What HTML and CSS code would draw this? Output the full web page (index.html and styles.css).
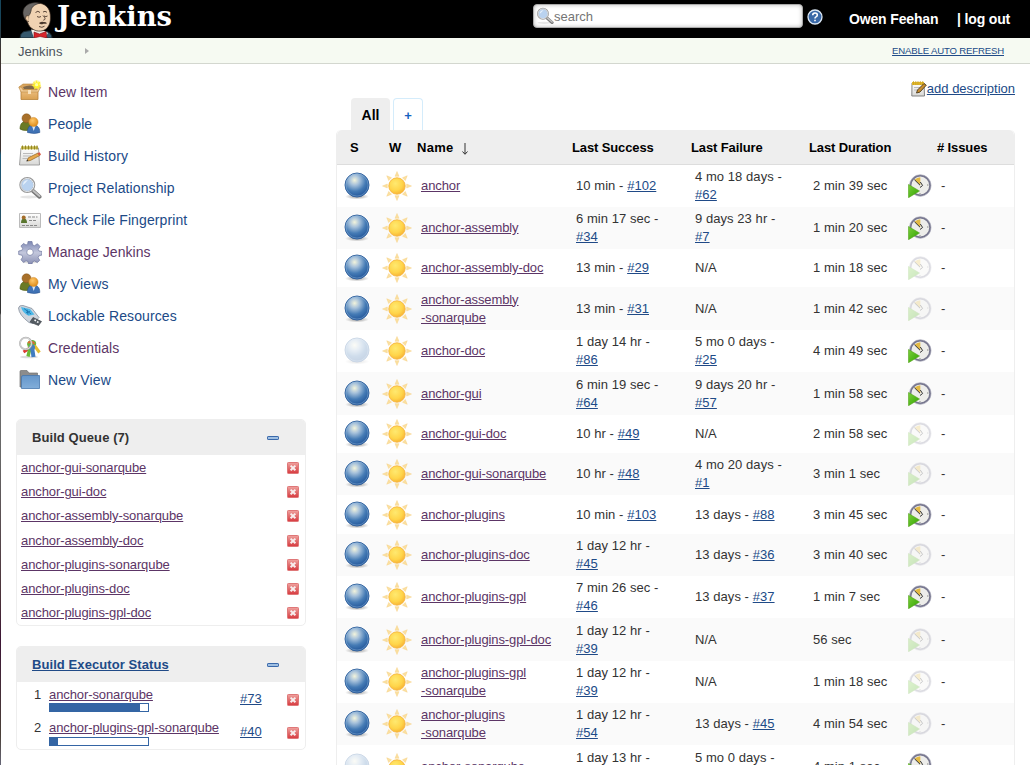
FILE: index.html
```html
<!DOCTYPE html>
<html lang="en">
<head>
<meta charset="utf-8">
<title>Dashboard [Jenkins]</title>
<link rel="stylesheet" href="styles.css">
</head>
<body>
<svg width="0" height="0" class="defs">
  <defs>
    <radialGradient id="gBall" cx=".4" cy=".3" r=".68"><stop offset="0" stop-color="#f3f4dc"/><stop offset=".3" stop-color="#a8c2db"/><stop offset=".68" stop-color="#457bb5"/><stop offset="1" stop-color="#265a9d"/></radialGradient>
    <radialGradient id="gSun" cx=".4" cy=".35" r=".65"><stop offset="0" stop-color="#ffe970"/><stop offset=".65" stop-color="#ffd54a"/><stop offset="1" stop-color="#f8b637"/></radialGradient>
    <radialGradient id="gShade"><stop offset="0" stop-color="#555" stop-opacity=".7"/><stop offset="1" stop-color="#777" stop-opacity="0"/></radialGradient>
    <linearGradient id="gRed" x2="0" y2="1"><stop offset="0" stop-color="#f0a3a0"/><stop offset=".5" stop-color="#e06d6d"/><stop offset="1" stop-color="#d8393f"/></linearGradient>
    <linearGradient id="gBox" x2="0" y2="1"><stop offset="0" stop-color="#edc082"/><stop offset="1" stop-color="#d9a052"/></linearGradient>
    <linearGradient id="gPad" x2="0" y2="1"><stop offset="0" stop-color="#fff"/><stop offset="1" stop-color="#d8d8d6"/></linearGradient>
    <linearGradient id="gFolder" x2="0" y2="1"><stop offset="0" stop-color="#6596ca"/><stop offset="1" stop-color="#82aeda"/></linearGradient>
    <linearGradient id="gGear" x2="0" y2="1"><stop offset="0" stop-color="#7d88b4"/><stop offset=".5" stop-color="#c3c7dc"/><stop offset="1" stop-color="#8a90b4"/></linearGradient>
    <linearGradient id="gGreen" x2="1" y2="1"><stop offset="0" stop-color="#7bcf3a"/><stop offset="1" stop-color="#2fa300"/></linearGradient>
    <radialGradient id="gPerson" cx=".4" cy=".35" r=".65"><stop offset="0" stop-color="#ffc86a"/><stop offset="1" stop-color="#e08d1b"/></radialGradient>
    <symbol id="ball" viewBox="0 0 26 28">
      <ellipse cx="13" cy="24.500" rx="12" ry="3" fill="url(#gShade)"/>
      <circle cx="13" cy="13" r="12" fill="url(#gBall)" stroke="#2b5c9b" stroke-width=".9"/>
      <circle cx="13" cy="13" r="11.100" fill="none" stroke="#9cc0df" stroke-opacity=".6" stroke-width=".7"/>
    </symbol>
    <symbol id="sun" viewBox="0 0 30 30">
      <g fill="#fbe0a0" stroke="#f5cd7c" stroke-width=".4">
        <path id="ray" d="M13 5.300 15 .5l2 4.800z"/>
        <use href="#ray" transform="rotate(45 15 15)"/><use href="#ray" transform="rotate(90 15 15)"/><use href="#ray" transform="rotate(135 15 15)"/><use href="#ray" transform="rotate(180 15 15)"/><use href="#ray" transform="rotate(225 15 15)"/><use href="#ray" transform="rotate(270 15 15)"/><use href="#ray" transform="rotate(315 15 15)"/>
      </g>
      <circle cx="15" cy="15" r="8.200" fill="url(#gSun)" stroke="#f6b53f" stroke-width=".9"/>
    </symbol>
    <symbol id="clock" viewBox="0 0 24 24">
      <circle cx="12.300" cy="11.500" r="9.800" fill="#ededea" stroke="#77778f" stroke-width="1.800"/>
      <circle cx="12.300" cy="11.500" r="10.800" fill="none" stroke="#a5a5b5" stroke-width=".6"/>
      <path d="M12.300 11.200 6.500 5.700Q9 3.200 12.300 3.200z" fill="#e2b944"/>
      <path d="M6.400 5.700 12 11.200M12.300 8l2.300 3.500-2.600 2" fill="none" stroke="#333" stroke-width="1"/>
      <path d="M19 11h1.500M12 19v1" stroke="#888"/>
      <path d="M.5 10.500 11.500 17 .5 23.700z" fill="url(#gGreen)" stroke="#55a51d" stroke-width=".6"/>
    </symbol>
    <symbol id="stop" viewBox="0 0 12 12">
      <rect x=".5" y=".5" width="11" height="11" rx=".8" fill="url(#gRed)" stroke="#df7778"/>
      <path d="m3.600 3.600 4.800 4.600m0-4.600L3.600 8.200" stroke="#f8eeee" stroke-width="2"/>
    </symbol>
    <symbol id="minus" viewBox="0 0 12 4"><rect x=".5" y=".5" width="11" height="3" rx=".6" fill="#9fbfe2" stroke="#3968aa"/></symbol>
    <symbol id="people" viewBox="0 0 24 24">
      <path d="M2 17c0-6 3-7.600 6-7.600s6 2 6 7.600l-5 1.500q-5 0-7-1.500z" fill="#6a7a24" stroke="#4b5b12" stroke-width=".6"/>
      <circle cx="8.500" cy="6.300" r="4.500" fill="#a8702a" stroke="#85541a" stroke-width=".5"/>
      <path d="M9.500 20.500c0-6 2.500-7.500 6-7.500s6.300 2 6.300 7.500q-5 2-12.300 0z" fill="#3f72b5" stroke="#234f8d" stroke-width=".6"/>
      <path d="M14 14h3.500L15.700 19z" fill="#dce8f8"/>
      <circle cx="15.500" cy="10" r="4.600" fill="url(#gPerson)" stroke="#d18a2a" stroke-width=".5"/>
    </symbol>
    <symbol id="lens" viewBox="0 0 24 24">
      <ellipse cx="11" cy="21" rx="9" ry="1.500" fill="#ccc" opacity=".5"/>
      <path d="m14.500 14.500 7 6.200" stroke="#777" stroke-width="4" stroke-linecap="round"/>
      <path d="m15 14.500 6.500 5.500" stroke="#c1c1c1" stroke-width="2" stroke-linecap="round"/>
      <circle cx="9.300" cy="9" r="7" fill="#b9d2ef" stroke="#999" stroke-width="2"/>
      <circle cx="9.300" cy="9" r="6.500" fill="none" stroke="#e9eef3"/>
      <path d="M5 9q0-4.500 5-5-2 2.500-5 5z" fill="#e6f0fb"/>
    </symbol>
  </defs>
</svg>

<header class="top">
  <svg class="logo" width="172" height="38" viewBox="0 0 172 38">
    <path d="M20 38q0-5 4-6.500l7-1 7 4 9-3q5 2 5 6.500z" fill="#36596e" stroke="#16262f"/>
    <path d="M31 29.500 45 31l3 2-3 5H34z" fill="#f3f0eb"/>
    <path d="M26 19C24 9 29 3 37 3c8 0 13 5 13.300 12 .4 5 0 10-3.800 13.500-3 3-9 3.500-13 1-3-1.500-5-4-6-7.500z" fill="#f0d3b3" stroke="#3a2a20" stroke-width=".7"/>
    <path d="M25.500 20C22 15 22 9 26.500 5.500 30.500 2.500 36 2 40 3.200 34 4.500 31.500 7 31 11l-1 3q-2 1-1.500 6z" fill="#696664" stroke="#29231f" stroke-width=".6"/>
    <path d="M28.500 15.500q-3.500-.5-3 3 .5 3.500 3.500 3" fill="#eccaa5" stroke="#3a2a20" stroke-width=".7"/>
    <path d="M35.500 12.500q2.500-2.500 4.500 0M43 12q2-1.500 4 .3M37 16.500q2 1.500 4 0M44 16q2 1.200 3.500 0M43 15.500q4 4 .3 4.700M39 26.500q3 1.800 5.500-.3" fill="none" stroke="#4a372b" stroke-width=".9"/>
    <path d="M39 23q3-2 4.500-1 2-.5 3.500 1.200-1.500 1-3.500.5-3 1.300-4.500-.7z" fill="#4a382c"/>
    <path d="m34 32 5.500 2L46 31.500l1 6.500-7-1.500-6 1.500z" fill="#d8242b" stroke="#7b1115" stroke-width=".6"/>
    <text x="57" y="26" textLength="115" lengthAdjust="spacingAndGlyphs" class="wordmark">Jenkins</text>
  </svg>
  <div class="account">
    <div class="search"><svg width="18" height="18"><use href="#lens"/></svg><span>search</span></div>
    <svg class="help" width="16" height="16" viewBox="0 0 16 16"><circle cx="8" cy="8" r="7" fill="#3a69a8" stroke="#dce8f5" stroke-width="1.300"/><path d="M5.700 6.300q0-2.300 2.300-2.300t2.300 2q0 1.200-1.300 1.900-1 .5-1 1.500M8 10.700v1.600" fill="none" stroke="#fff" stroke-width="1.600"/></svg>
    <a class="user">Owen Feehan</a><a class="logout">| log out</a>
  </div>
</header>
<nav class="crumbs"><span class="home">Jenkins</span><i class="arrow"></i><a class="refresh">ENABLE AUTO REFRESH</a></nav>

<div class="page">
<aside class="side">
  <ul class="tasks">
    <li class="seen"><svg width="24" height="24" viewBox="0 0 24 24"><path d="m1 7 4-3h13l4 3-2 3H3z" fill="#d9a55f" stroke="#b9843b" stroke-width=".6"/><path d="M5 7q7-3 13 0l-1 2H6z" fill="#80694b"/><path d="M3 10h17v9.500H3z" fill="url(#gBox)" stroke="#b8813a" stroke-width=".8"/><path d="m.8 7.200 2.500-.2 1.700 2.800h14L20.500 7l2.300.3L20 12H3z" fill="#f0ca95" stroke="#bd8a45" stroke-width=".6"/><path d="M10 10h3v4h-3z" fill="#f9e2bd"/><circle cx="18.600" cy="4.500" r="4.300" fill="#fff04a" opacity=".55"/><path d="m18.500 0 1 2.800 3-1-1.300 2.800 2.300 1.600-3 .6.300 3-2.300-2-2.500 1.600.7-2.900-2.900-.8 2.700-1.400L15.200 2l2.600.9z" fill="#fff32e"/><circle cx="18.600" cy="4.700" r="1.600" fill="#ffffa8"/></svg>New Item</li>
    <li><svg width="24" height="24"><use href="#people"/></svg>People</li>
    <li><svg width="24" height="24" viewBox="0 0 24 24"><path d="M3 4h17.500l1 17H1.500z" fill="url(#gPad)" stroke="#999" stroke-width=".9"/><path d="M3 2.300h17v3H3z" fill="#c5b84c"/><path d="M4.500 1.500v4m3-4v4m3-4v4m3-4v4m3-4v4m2.500-4v4" stroke="#938625"/><path d="M5 9.500h10M5 12h8M4.500 14.500h5" stroke="#bbb"/><path d="m9 17 1.300-3.200L20 9l1.800 2.500-9.500 5z" fill="#e7a94b" stroke="#8d6427" stroke-width=".7"/><path d="m19.500 9.200 2-1 1.600 2.200-2 1.200z" fill="#d85742"/><path d="m8.300 17.500.9-2 1.200 1.300z" fill="#333"/></svg>Build History</li>
    <li><svg width="24" height="24"><use href="#lens"/></svg>Project Relationship</li>
    <li><svg width="24" height="24" viewBox="0 0 24 24"><path d="M1.500 5.500h21v14h-21z" fill="url(#gPad)" stroke="#bbb"/><path d="M3 15q0-4.500 3-4.500T9 15z" fill="#59762e"/><circle cx="5.700" cy="9.500" r="2" fill="#a56d2a"/><path d="M10 9h9.500M11 12.500h8M4 17.500h16" stroke="#888" stroke-dasharray="3 1"/></svg>Check File Fingerprint</li>
    <li class="seen"><svg width="24" height="24" viewBox="0 0 24 24"><ellipse cx="12" cy="22" rx="8" ry="1.500" fill="#ccc" opacity=".6"/><g fill="url(#gGear)" stroke="#6e779f" stroke-width=".7"><path fill-rule="evenodd" d="m10 1.500 4 0 .5 3.300 2 .9 2.900-2 2.700 2.800-1.900 2.800.8 1.700 3 .5v3.500l-3.100.8-.8 2 1.700 2.500-2.500 2.300-2.800-1.600-2 .8-.5 2.200h-3.300l-.7-2.500-2-.8-2.400 1.800L3 19.800 4.700 17l-.8-1.800-3.200-.7V11l3.100-.6.9-2L2.900 6l2.600-2.600L8 5l1.700-.8zM12 9a3.200 3.200 0 1 0 .01 0z"/></g></svg>Manage Jenkins</li>
    <li><svg width="24" height="24"><use href="#people"/></svg>My Views</li>
    <li><svg width="24" height="24" viewBox="0 0 24 24"><path d="M.5 4Q1 1 5 1.500l9 3 7 9-6 6-4-1Q1 11 .5 4z" fill="#cfd5dd" stroke="#858f9d" stroke-width=".8"/><path d="m3 3 9 2 4.500 5.500-6 1.300q-6-3-7.500-8.800z" fill="#4cb8e8"/><path d="m6 4.500 7 5.500m-4-4.500 1 5m-2-2 4-1" stroke="#176ca8" stroke-width=".8"/><path d="m15 13.500 8.500 4-3 4-8.500-3.500z" fill="#555c63" stroke="#34393f" stroke-width=".6"/><path d="m16.500 16 1.500.7m1 1 1.500.7" stroke="#fff" stroke-width="1.600"/></svg>Lockable Resources</li>
    <li class="seen"><svg width="24" height="24" viewBox="0 0 24 24"><ellipse cx="11" cy="21" rx="9" ry="1.300" fill="#ddd"/><path d="m16 9 5.500 7.500" stroke="#e3bd32" stroke-width="3"/><path d="M12 12 5.500 16" stroke="#dd3a34" stroke-width="3"/><path d="m12 12-2 8.500" stroke="#6ab936" stroke-width="3.400"/><path d="m14 11 1.500 10" stroke="#407cc0" stroke-width="4"/><path d="M9 8q1-4.500 6-4 4 1 3 5l-3 .5q-3-1-5 2z" fill="#69b53c"/><path d="M10 7q4-3 6.500 1" fill="none" stroke="#db6b33" stroke-width="2"/><circle cx="14" cy="11.500" r="3" fill="#477fba"/><circle cx="7.800" cy="7.500" r="5.800" fill="none" stroke="#aaa" stroke-width="1.800"/><circle cx="7.800" cy="7.500" r="5.700" fill="none" stroke="#eee" stroke-width=".7"/></svg>Credentials</li>
    <li><svg width="24" height="24" viewBox="0 0 24 24"><path d="M2 19V3.500q0-1 1-1h6l2 2.500h8.500v14z" fill="#8c8c8c" stroke="#717171" stroke-width=".7"/><path d="M3.500 9q0-1.500 1.500-1.500h16.500v13H3.500z" fill="url(#gFolder)" stroke="#4777ad" stroke-width=".8"/></svg>New View</li>
  </ul>

  <section class="pane queue">
    <h2>Build Queue (7)<svg width="12" height="4"><use href="#minus"/></svg></h2>
    <ul>
      <li><a>anchor-gui-sonarqube</a><svg width="12" height="12"><use href="#stop"/></svg></li>
      <li><a>anchor-gui-doc</a><svg width="12" height="12"><use href="#stop"/></svg></li>
      <li><a>anchor-assembly-sonarqube</a><svg width="12" height="12"><use href="#stop"/></svg></li>
      <li><a>anchor-assembly-doc</a><svg width="12" height="12"><use href="#stop"/></svg></li>
      <li><a>anchor-plugins-sonarqube</a><svg width="12" height="12"><use href="#stop"/></svg></li>
      <li><a>anchor-plugins-doc</a><svg width="12" height="12"><use href="#stop"/></svg></li>
      <li><a>anchor-plugins-gpl-doc</a><svg width="12" height="12"><use href="#stop"/></svg></li>
    </ul>
  </section>

  <section class="pane executors">
    <h2><a>Build Executor Status</a><svg width="12" height="4"><use href="#minus"/></svg></h2>
    <div class="exec"><span class="num">1</span><div class="job"><a class="seen">anchor-sonarqube</a><div class="bar"><i style="width:92%"></i></div></div><a class="build">#73</a><svg width="12" height="12"><use href="#stop"/></svg></div>
    <div class="exec"><span class="num">2</span><div class="job"><a class="seen">anchor-plugins-gpl-sonarqube</a><div class="bar"><i style="width:8%"></i></div></div><a class="build">#40</a><svg width="12" height="12"><use href="#stop"/></svg></div>
  </section>
</aside>

<main class="main">
  <div class="describe"><svg width="16" height="16" viewBox="0 0 16 16"><path d="M1 2h12l.5 13H.8z" fill="url(#gPad)" stroke="#777" stroke-width=".9"/><path d="M1 1h12v3H1z" fill="#e0b72d"/><path d="M2.500 0v4m2.300-4v4M7 0v4m2.300-4v4m2.400-4v4" stroke="#c79d1e" stroke-width=".7"/><path d="M3 6.500h6M3 9h4" stroke="#bbb"/><path d="m5.500 12 1-3L13 2.500l2.300 1.700-6.500 7z" fill="#c98e2f" stroke="#4b391b" stroke-width=".9"/></svg><a>add description</a></div>
  <div class="tabs"><span class="tab active">All</span><span class="tab add">+</span></div>
  <div class="table">
    <div class="row head"><span class="s">S</span><span class="w">W</span><span class="name">Name<svg class="sort" width="8" height="12" viewBox="0 0 8 12"><path d="M4 0v11M1.500 8.500 4 11.300 6.500 8.500" fill="none" stroke="#333" stroke-width="1"/></svg></span><span>Last Success</span><span>Last Failure</span><span>Last Duration</span><span class="issues"># Issues</span></div>
    <div class="row"><svg class="ball"><use href="#ball"/></svg><svg class="sun"><use href="#sun"/></svg><a class="seen">anchor</a><span>10 min - <a>#102</a></span><span>4 mo 18 days -<br><a>#62</a></span><span>2 min 39 sec</span><svg class="clock"><use href="#clock"/></svg><span>-</span></div>
    <div class="row"><svg class="ball"><use href="#ball"/></svg><svg class="sun"><use href="#sun"/></svg><a class="seen">anchor-assembly</a><span>6 min 17 sec -<br><a>#34</a></span><span>9 days 23 hr -<br><a>#7</a></span><span>1 min 20 sec</span><svg class="clock"><use href="#clock"/></svg><span>-</span></div>
    <div class="row h38"><svg class="ball"><use href="#ball"/></svg><svg class="sun"><use href="#sun"/></svg><a class="seen">anchor-assembly-doc</a><span>13 min - <a>#29</a></span><span>N/A</span><span>1 min 18 sec</span><svg class="clock off"><use href="#clock"/></svg><span>-</span></div>
    <div class="row h43"><svg class="ball"><use href="#ball"/></svg><svg class="sun"><use href="#sun"/></svg><a class="seen">anchor-assembly<br>-sonarqube</a><span>13 min - <a>#31</a></span><span>N/A</span><span>1 min 42 sec</span><svg class="clock off"><use href="#clock"/></svg><span>-</span></div>
    <div class="row"><svg class="ball off"><use href="#ball"/></svg><svg class="sun"><use href="#sun"/></svg><a class="seen">anchor-doc</a><span>1 day 14 hr -<br><a>#86</a></span><span>5 mo 0 days -<br><a>#25</a></span><span>4 min 49 sec</span><svg class="clock"><use href="#clock"/></svg><span>-</span></div>
    <div class="row h43"><svg class="ball"><use href="#ball"/></svg><svg class="sun"><use href="#sun"/></svg><a class="seen">anchor-gui</a><span>6 min 19 sec -<br><a>#64</a></span><span>9 days 20 hr -<br><a>#57</a></span><span>1 min 58 sec</span><svg class="clock"><use href="#clock"/></svg><span>-</span></div>
    <div class="row h38"><svg class="ball"><use href="#ball"/></svg><svg class="sun"><use href="#sun"/></svg><a class="seen">anchor-gui-doc</a><span>10 hr - <a>#49</a></span><span>N/A</span><span>2 min 58 sec</span><svg class="clock off"><use href="#clock"/></svg><span>-</span></div>
    <div class="row"><svg class="ball"><use href="#ball"/></svg><svg class="sun"><use href="#sun"/></svg><a class="seen">anchor-gui-sonarqube</a><span>10 hr - <a>#48</a></span><span>4 mo 20 days -<br><a>#1</a></span><span>3 min 1 sec</span><svg class="clock off"><use href="#clock"/></svg><span>-</span></div>
    <div class="row h39"><svg class="ball"><use href="#ball"/></svg><svg class="sun"><use href="#sun"/></svg><a class="seen">anchor-plugins</a><span>10 min - <a>#103</a></span><span>13 days - <a>#88</a></span><span>3 min 45 sec</span><svg class="clock"><use href="#clock"/></svg><span>-</span></div>
    <div class="row"><svg class="ball"><use href="#ball"/></svg><svg class="sun"><use href="#sun"/></svg><a class="seen">anchor-plugins-doc</a><span>1 day 12 hr -<br><a>#45</a></span><span>13 days - <a>#36</a></span><span>3 min 40 sec</span><svg class="clock off"><use href="#clock"/></svg><span>-</span></div>
    <div class="row"><svg class="ball"><use href="#ball"/></svg><svg class="sun"><use href="#sun"/></svg><a class="seen">anchor-plugins-gpl</a><span>7 min 26 sec -<br><a>#46</a></span><span>13 days - <a>#37</a></span><span>1 min 7 sec</span><svg class="clock"><use href="#clock"/></svg><span>-</span></div>
    <div class="row h43"><svg class="ball"><use href="#ball"/></svg><svg class="sun"><use href="#sun"/></svg><a class="seen">anchor-plugins-gpl-doc</a><span>1 day 12 hr -<br><a>#39</a></span><span>N/A</span><span>56 sec</span><svg class="clock off"><use href="#clock"/></svg><span>-</span></div>
    <div class="row"><svg class="ball"><use href="#ball"/></svg><svg class="sun"><use href="#sun"/></svg><a class="seen">anchor-plugins-gpl<br>-sonarqube</a><span>1 day 12 hr -<br><a>#39</a></span><span>N/A</span><span>1 min 18 sec</span><svg class="clock off"><use href="#clock"/></svg><span>-</span></div>
    <div class="row"><svg class="ball"><use href="#ball"/></svg><svg class="sun"><use href="#sun"/></svg><a class="seen">anchor-plugins<br>-sonarqube</a><span>1 day 12 hr -<br><a>#54</a></span><span>13 days - <a>#45</a></span><span>4 min 54 sec</span><svg class="clock off"><use href="#clock"/></svg><span>-</span></div>
    <div class="row h43"><svg class="ball off"><use href="#ball"/></svg><svg class="sun"><use href="#sun"/></svg><a class="seen">anchor-sonarqube</a><span>1 day 13 hr -</span><span>5 mo 0 days -</span><span>4 min 1 sec</span><svg class="clock"><use href="#clock"/></svg></div>
  </div>
</main>
</div>
</body>
</html>
```
FILE: styles.css
```css
* { box-sizing: border-box; }
html { overflow: hidden; }
body {
  margin: 0;
  height: 765px;
  overflow: hidden;
  padding-left: 1px;
  background: linear-gradient(#17455a 0, #17455a 18px, #3d332f 50px, #3a302e 150px, #1c5876 155px, #2a4c5c 255px, #333 258px, #333 313px, #777 315px, #666 460px, #4a3038 600px, #3c1535 640px, #4a4038 735px, #667 765px);
  font: 13px/18px "Liberation Sans", Arial, sans-serif;
  color: #333;
}
.defs { position: absolute; }
ul { list-style: none; margin: 0; padding: 0; }
svg { display: block; flex: none; }
a { color: #204a87; text-decoration: underline; text-underline-offset: 1px; }
a.seen, .queue li a { color: #5c3566; letter-spacing: -.1px; }

.top { display: flex; justify-content: space-between; height: 38px; background: #000; }
.wordmark { font: bold 27px "DejaVu Serif", serif; fill: #fff; }
.logo { margin-left: -1px; }
.account { display: flex; align-items: flex-start; }
.search {
  display: flex;
  align-items: center;
  width: 270px;
  height: 24px;
  margin-top: 4px;
  padding-left: 2px;
  border: 1px solid #aaa;
  border-radius: 4px;
  background: #fff;
  box-shadow: inset 0 0 4px #bbb;
  color: #757575;
}
.search span { padding-top: 1px; }
.help { margin: 9px 0 0 4px; }
.account a { margin-top: 10px; color: #fff; font-weight: bold; font-size: 14px; letter-spacing: -.15px; text-decoration: none; white-space: nowrap; }
.user { width: 90px; margin-left: 26px; }
.logout { width: 73px; margin-left: 18px; }

.crumbs { display: flex; align-items: center; height: 26px; padding: 0 26px 0 17px; background: #f6faf2; border-bottom: 1px solid #d3d7cf; }
.home { padding-top: 2px; color: #4d545d; letter-spacing: .05px; }
.arrow { margin-left: 23px; border: 3.500px solid transparent; border-left: 4px solid #aaa; border-right: 0; }
.refresh { margin-left: auto; font-size: 9.600px; letter-spacing: -.16px; }

.page { display: flex; height: 701px; background: #fff; }
.side { width: 305px; padding: 12px 0 0 15px; }
.tasks { height: 343px; }
.tasks li { display: flex; align-items: center; gap: 6px; height: 32px; padding-left: 2px; font-size: 14px; letter-spacing: .11px; color: #204a87; }
.tasks li.seen { color: #5c3566; letter-spacing: .04px; }

.pane { border: 1px solid #eee; border-radius: 5px; background: #fff; overflow: hidden; }
.queue { height: 207px; }
.executors { height: 104px; margin-top: 20px; }
.pane h2 { display: flex; justify-content: space-between; align-items: center; height: 35px; margin: 0; padding: 1px 26px 0 15px; background: #eee; font-size: 13px; letter-spacing: .08px; }
.queue ul { padding-top: 1px; }
.queue li { display: flex; align-items: center; justify-content: space-between; height: 24.200px; padding: 0 6px 0 4px; }
.exec { display: grid; grid-template-columns: 15px 191px 47px 12px; align-items: start; height: 33px; padding: 4px 0 0 17px; }
.bar { width: 100px; height: 9px; margin-top: -1px; border: 1px solid #3465a4; }
.exec + .exec .bar { margin-top: 0; }
.bar i { display: block; height: 7px; background: #3465a4; }
.build { margin-top: 4px; }
.exec svg { margin-top: 8px; }

.main { width: 679px; margin-left: 30px; padding-top: 16px; }
.describe { display: flex; justify-content: flex-end; align-items: center; height: 18px; }
.tabs { display: flex; gap: 3px; height: 32px; padding-left: 15px; }
.tab { border-radius: 4px 4px 0 0; font-weight: bold; text-align: center; line-height: 34px; }
.active { width: 39px; background: #eee; color: #000; font-size: 14px; }
.add { width: 30px; border: 1px solid #d4ecfb; border-bottom: 0; color: #1562c0; line-height: 33px; }
.table { height: 635px; overflow: hidden; border: 1px solid #eee; border-radius: 5px 5px 0 0; border-top: 0; border-bottom: 0; }
.row { display: grid; grid-template-columns: 46px 38px 155px 119px 118px 95px 33px 1fr; align-items: center; height: 42px; white-space: nowrap; letter-spacing: .06px; }
.row:nth-child(odd) { background: #fafafa; }
.row.h38 { height: 38px; }
.row.h39 { height: 39px; }
.row.h43 { height: 43px; }
.row:last-child { align-items: start; height: 20px; padding-top: 4px; background: #fff; }
.row:last-child > a, .row:last-child > span:nth-child(6) { padding-top: 9px; }
.row:last-child > .sun, .row:last-child > .clock, .row:last-child > .ball { margin-top: 4px; }
.row.head { height: 35px; grid-template-columns: 51px 29px 155px 119px 118px 128px 1fr; padding-top: 1px; background: #eee; border-bottom: 1px solid #ddd; color: #000; font-weight: bold; letter-spacing: -.12px; border-radius: 5px 5px 0 0; }
.s { padding-left: 13px; }
.w { padding-left: 1px; }
.name { display: flex; align-items: center; gap: 7px; letter-spacing: .3px; }
.sort { margin-top: 3px; }
.ball { width: 26px; height: 28px; margin-left: 7px; }
.sun { width: 30px; height: 30px; margin-left: -1px; }
.clock { width: 24px; height: 24px; }
.clock.off { opacity: .25; }
.ball.off { opacity: .25; }
```
